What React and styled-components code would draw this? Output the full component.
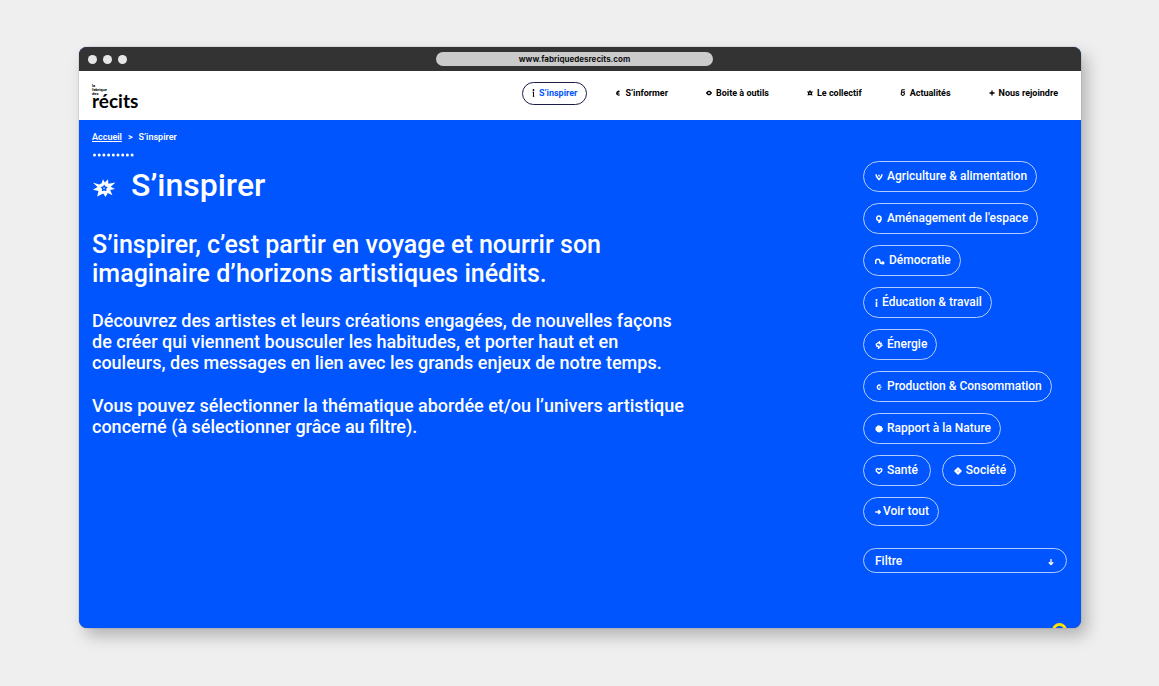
import React from "react";
import styled, { createGlobalStyle } from "styled-components";

const blue = "#0055ff";

const GlobalStyle = createGlobalStyle`
  * { box-sizing: border-box; }
  body {
    margin: 0;
    background: #efefef;
    font-family: Roboto, "Liberation Sans", sans-serif;
    font-weight: 500;
  }
  button, input, select { font: inherit; color: inherit; }
  h1, p, ul, ol { margin: 0; padding: 0; }
  ul, ol { list-style: none; }
`;

const Desktop = styled.div`
  min-height: 100vh;
  padding: 47px 78px 58px 79px;
  display: flex;
`;

const BrowserWindow = styled.div`
  flex: 1;
  min-width: 0;
  display: flex;
  flex-direction: column;
  position: relative;
  overflow: hidden;
  border-radius: 8px;
  background: ${blue};
  box-shadow: 6px 8px 16px rgba(0, 0, 0, 0.25), 0 0 1px rgba(0, 0, 0, 0.7);
`;

const TitleBar = styled.div`
  display: grid;
  grid-template-columns: 1fr 277px 1fr;
  align-items: center;
  height: 24px;
  padding: 0 20px 0 9px;
  background: #333333;
`;

const Lights = styled.div`
  display: flex;
  gap: 6px;
`;

const Light = styled.span`
  width: 9px;
  height: 9px;
  border-radius: 50%;
  background: #e6e6e6;
`;

const Address = styled.input`
  width: 100%;
  height: 14px;
  padding: 0;
  border: 0;
  border-radius: 7px;
  background: #cbcbcb;
  color: #111111;
  font-family: Inter, sans-serif;
  font-size: 8px;
  font-weight: 700;
  text-align: center;
`;

const Header = styled.header`
  display: flex;
  align-items: center;
  justify-content: space-between;
  height: 49px;
  padding: 0 13px;
  background: #ffffff;
`;

const Logo = styled.a`
  display: flex;
  flex-direction: column;
  padding-bottom: 1px;
  color: #000000;
  text-decoration: none;
`;

const LogoSmall = styled.span`
  font-size: 4px;
  line-height: 4px;
  font-weight: 700;
`;

const LogoName = styled.span`
  font-family: Lato, sans-serif;
  font-size: 19px;
  line-height: 10px;
  font-weight: 700;
`;

const NavList = styled.ul`
  display: flex;
  gap: 18px;
  padding-bottom: 4px;
`;

const NavLink = styled.a`
  display: flex;
  align-items: center;
  gap: 4px;
  height: 23px;
  padding: 0 9px 1px;
  border: 1px solid ${(p) => (p.$active ? "#1c1c4a" : "transparent")};
  border-radius: 12px;
  color: ${(p) => (p.$active ? blue : "#000000")};
  font-size: 9px;
  font-weight: 700;
  text-decoration: none;
  white-space: nowrap;
  svg { color: #000000; }
`;

const Page = styled.main`
  flex: 1;
  display: flex;
  justify-content: space-between;
  gap: 40px;
  padding: 11px 14px 40px 13px;
  color: #ffffff;
`;

const Content = styled.article`
  flex: 1;
  max-width: 598px;
`;

const Crumbs = styled.ol`
  display: flex;
  gap: 6px;
  font-size: 9px;
  font-weight: 600;
  line-height: 12px;
  a { color: inherit; }
`;

const Dots = styled.svg`
  display: block;
  width: 43px;
  height: 4px;
  margin-top: 10px;
`;

const TitleRow = styled.div`
  display: flex;
  align-items: center;
  gap: 15px;
  margin-top: 8px;
  svg { margin-top: 6px; }
`;

const Title = styled.h1`
  font-size: 32px;
  line-height: 40px;
  font-weight: 500;
`;

const Lead = styled.p`
  margin-top: 25px;
  font-size: 25px;
  line-height: 29px;
`;

const Text = styled.p`
  margin-top: 22px;
  font-size: 18px;
  line-height: 21px;
`;

const Sidebar = styled.aside`
  width: 204px;
  padding-top: 30px;
`;

const Themes = styled.div`
  display: flex;
  flex-wrap: wrap;
  gap: 11px;
  margin-bottom: 11px;
`;

const Pill = styled.button`
  display: flex;
  align-items: center;
  gap: ${(p) => (p.$tight ? "2px" : "4px")};
  height: ${(p) => (p.$tight ? "29px" : "31px")};
  padding: 0 9px 2px 11px;
  border: 1px solid #b3ccff;
  border-radius: 16px;
  background: transparent;
  font-size: 12px;
  white-space: nowrap;
  svg { margin-top: 2px; }
`;

const Filter = styled.label`
  display: flex;
  align-items: center;
  height: 25px;
  margin-top: 22px;
  padding: 0 11px;
  border: 1px solid #b3ccff;
  border-radius: 13px;
  svg { margin-top: 2px; }
`;

const FilterSelect = styled.select`
  flex: 1;
  appearance: none;
  padding: 0;
  border: 0;
  background: transparent;
  font-size: 12px;
`;

const Bubble = styled.span`
  position: absolute;
  right: 14px;
  bottom: -10px;
  width: 15px;
  height: 15px;
  border: 3px solid #ffe100;
  border-radius: 50%;
`;

const shapes = {
  person: <><circle cx="1.5" cy="1" r=".9" fill="currentColor" stroke="none" /><path d="M1.5 2.800v4.700M.600 3.200h1M.800 7.200h1.500" strokeWidth="1" /></>,
  c: <path d="M4.600 2.500A1.900 1.900 0 1 0 4.600 5.800M2.500 4.200h1.800" />,
  eye: <path d="M.6 4 2.200 2.500h1.600L5.400 4 3.800 5.500H2.200z" />,
  flower: <path fillRule="evenodd" d="M3 .8 4 2.500l2-.1-1.100 1.800.6 2.200L3 5.900.5 6.400l.6-2.200L0 2.400l2 .1zM3 3.500a.8.8 0 1 0 0 1.600.8.8 0 0 0 0-1.600z" fill="currentColor" stroke="none" />,
  six: <path d="M4.800.7H2L1.500 3.200h1.600M3.200 3.200a1.600 1.600 0 1 1-1.700.6M3.200 3.200 4.800 2.500" strokeWidth="1.100" />,
  plus: <path d="M3 1.500v5M.5 4h5" />,
  sprout: <path d="M1 1.200c0 2.200 1.200 3.200 3 5.300 1.800-2.100 3-3.100 3-5.300M4 1.800v1.800" strokeWidth="1.500" />,
  pin: <path d="M6.100 3.200a2.200 2.200 0 1 0-1.700 2.200C5.600 5.200 6.100 4.400 6.100 3.200c.1 2.600-.8 4-2.800 4.400" strokeWidth="1.500" />,
  wave: <><path d="M.7 7V4.300a2.100 2.100 0 0 1 4.200 0c0 1.700.6 2.200 1.700 2" strokeWidth="1.500" /><circle cx="7.800" cy="5.900" r="1.700" fill="currentColor" stroke="none" /></>,
  i: <><circle cx="1.500" cy="0.900" r="1" fill="currentColor" stroke="none" /><path d="M1.500 2.600V8" strokeWidth="1.600" /></>,
  bolt: <path d="M4.500.8 1.200 3.300l.7 2.100 1.700-.3-.1 2.200L7 4.300l-1.200-.2.400-1.800-1.800.3z" />,
  cycle: <path d="M5.500 2.300a2.100 2.100 0 1 0 0 3.600M4.500 4.100h2" strokeWidth="1.400" />,
  sun: <path d="m4 .3 1.100.7 1.400 0 .4 1.300L8 3.400 7.600 4.700 7.300 6l-1.300.5L5 7.600 3.700 7.200 2.300 7 1.500 6 .4 5 .6 3.700.6 2.300 1.800 1.600 2.700.6z" fill="currentColor" stroke="none" />,
  heart: <path d="M4 6.400 1.300 4V2.200l1.300-.7L4 2.500l1.400-1L6.700 2.200V4z" strokeWidth="1.400" />,
  diamond: <path fillRule="evenodd" d="M4 0 5.800 1.800 8 4 5.800 6.200 4 8 2.200 6.200 0 4l2.200-2.200zM4 3.400a.6.6 0 1 0 0 1.200.6.6 0 0 0 0-1.200z" fill="currentColor" stroke="none" />,
  arrow: <path d="M.3 4h4.900M3.300 2l2 2-2 2" />,
  down: <path d="M4 1v5.500M1.800 4.300 4 6.500l2.200-2.200" />,
};

const Icon = ({ name, width = 8 }) => (
  <svg width={width} height="8" viewBox={`0 0 ${width} 8`} fill="none" stroke="currentColor" strokeWidth="1.3" aria-hidden="true">
    {shapes[name]}
  </svg>
);

const Burst = () => (
  <svg width="24" height="20" viewBox="0 0 24 20" aria-hidden="true">
    <path
      fill="#fff"
      d="M9.600 5.200 11 1.200l1.800 3.300L16 1.200l.4 4.600 7.100-1.400-4.800 4.400 4.300 2.100-4.800 1 2.200 5.400-4.600-2.400-2.300 4.100-2.200-3.500L5.200 18.600l1.300-5.700-5.500-1.200 4.600-2.600L.8 4.600l6.300 1.900z"
    />
    <path fill={blue} d="m12.200 6.400 1.200 2 2.300.6-1.500 1.900.2 2.400-2.200-.9-2.300.9.300-2.400-1.600-1.900 2.400-.6z" />
    <circle cx="12.100" cy="10.200" r=".8" fill="#fff" />
  </svg>
);

const navItems = [
  ["person", "S’inspirer", 3],
  ["c", "S’informer", 6],
  ["eye", "Boite à outils", 6],
  ["flower", "Le collectif", 6],
  ["six", "Actualités", 6],
  ["plus", "Nous rejoindre", 6],
];

const themes = [
  ["sprout", "Agriculture & alimentation"],
  ["pin", "Aménagement de l'espace"],
  ["wave", "Démocratie", 10],
  ["i", "Éducation & travail", 3],
  ["bolt", "Énergie"],
  ["cycle", "Production & Consommation"],
  ["sun", "Rapport à la Nature"],
  ["heart", "Santé\u00a0"],
  ["diamond", "Société"],
];

export default function App() {
  return (
    <>
      <GlobalStyle />
      <Desktop>
        <BrowserWindow>
          <TitleBar>
            <Lights><Light /><Light /><Light /></Lights>
            <Address aria-label="Adresse" readOnly value="www.fabriquedesrecits.com" />
          </TitleBar>
          <Header>
            <Logo href="#">
              <LogoSmall>la</LogoSmall>
              <LogoSmall>fabrique</LogoSmall>
              <LogoSmall>des</LogoSmall>
              <LogoName>récits</LogoName>
            </Logo>
            <nav>
              <NavList>
                {navItems.map(([icon, label, width], i) => (
                  <li key={label}>
                    <NavLink href="#" $active={i === 0}><Icon name={icon} width={width} />{label}</NavLink>
                  </li>
                ))}
              </NavList>
            </nav>
          </Header>
          <Page>
            <Content>
              <Crumbs>
                <li><a href="#">Accueil</a></li>
                <li aria-hidden="true">&gt;</li>
                <li>S’inspirer</li>
              </Crumbs>
              <Dots viewBox="0 0 43 4" aria-hidden="true">
                <path d="M2.500 2H42" stroke="#fff" strokeWidth="3" strokeLinecap="round" strokeDasharray="0 4.700" />
              </Dots>
              <TitleRow>
                <Burst />
                <Title>S’inspirer</Title>
              </TitleRow>
              <Lead>S’inspirer, c’est partir en voyage et nourrir son imaginaire d’horizons artistiques inédits.</Lead>
              <Text>Découvrez des artistes et leurs créations engagées, de nouvelles façons de créer qui viennent bousculer les habitudes, et porter haut et en couleurs, des messages en lien avec les grands enjeux de notre temps.</Text>
              <Text>Vous pouvez sélectionner la thématique abordée et/ou l’univers artistique concerné (à sélectionner grâce au filtre).</Text>
            </Content>
            <Sidebar>
              <Themes>
                {themes.map(([icon, label, width]) => (
                  <Pill key={label} type="button"><Icon name={icon} width={width} />{label}</Pill>
                ))}
              </Themes>
              <Pill type="button" $tight><Icon name="arrow" width={6} />Voir tout</Pill>
              <Filter>
                <FilterSelect aria-label="Filtre"><option>Filtre</option></FilterSelect>
                <Icon name="down" />
              </Filter>
            </Sidebar>
          </Page>
          <Bubble />
        </BrowserWindow>
      </Desktop>
    </>
  );
}
